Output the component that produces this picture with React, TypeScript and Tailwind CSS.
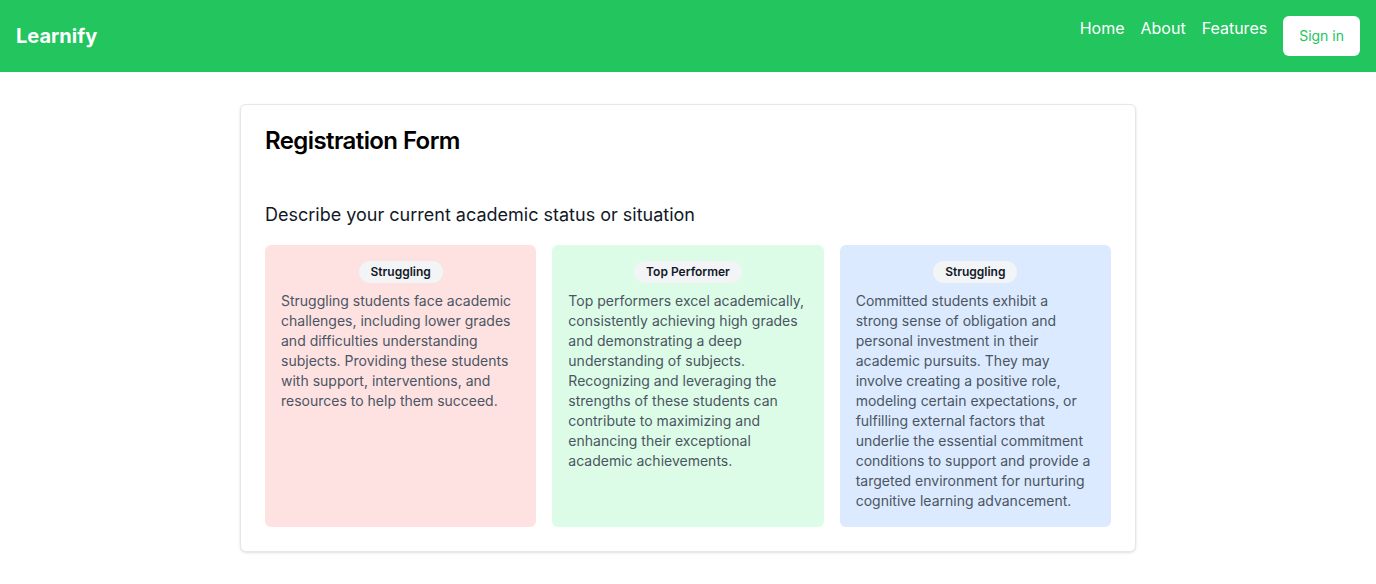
import React from "react";

const cards = [
  {
    bg: "bg-[#fee2e2]",
    badge: "Struggling",
    text: "Struggling students face academic challenges, including lower grades and difficulties understanding subjects. Providing these students with support, interventions, and resources to help them succeed.",
  },
  {
    bg: "bg-[#dcfce7]",
    badge: "Top Performer",
    text: "Top performers excel academically, consistently achieving high grades and demonstrating a deep understanding of subjects. Recognizing and leveraging the strengths of these students can contribute to maximizing and enhancing their exceptional academic achievements.",
  },
  {
    bg: "bg-[#dbeafe]",
    badge: "Struggling",
    text: "Committed students exhibit a strong sense of obligation and personal investment in their academic pursuits. They may involve creating a positive role, modeling certain expectations, or fulfilling external factors that underlie the essential commitment conditions to support and provide a targeted environment for nurturing cognitive learning advancement.",
  },
];

export default function App() {
  return (
    <div className="min-h-screen bg-white" style={{ fontFamily: "Inter, 'Noto Sans', sans-serif" }}>
      <header className="flex h-[72px] items-center justify-between bg-[#22c55e] px-4">
        <div className="text-xl font-bold text-white">Learnify</div>
        <nav className="flex items-start gap-4 self-start pt-4">
          <a className="text-base leading-6 text-white">Home</a>
          <a className="text-base leading-6 text-white">About</a>
          <a className="text-base leading-6 text-white">Features</a>
          <button className="h-10 rounded-md bg-white px-4 text-sm text-[#22c55e]">Sign in</button>
        </nav>
      </header>
      <main className="flex justify-center pt-8">
        <div className="w-[896px] rounded-md border border-[#e5e7eb] bg-white p-6 shadow-sm">
          <h1 className="text-2xl font-semibold leading-6 tracking-tight text-black">Registration Form</h1>
          <p className="mt-[48px] text-lg leading-7 text-[#111827]">Describe your current academic status or situation</p>
          <div className="mt-4 grid grid-cols-3 gap-4">
            {cards.map((c, i) => (
              <div key={i} className={`${c.bg} rounded-md py-4 pl-4 pr-[18px]`}>
                <div className="flex justify-center pl-[2px]">
                  <span className="rounded-full bg-[#f3f4f6] px-3 py-[3px] text-xs font-semibold leading-4 text-[#111827]">
                    {c.badge}
                  </span>
                </div>
                <p className="mt-2 text-sm leading-5 text-[#4b5563]">{c.text}</p>
              </div>
            ))}
          </div>
        </div>
      </main>
    </div>
  );
}
